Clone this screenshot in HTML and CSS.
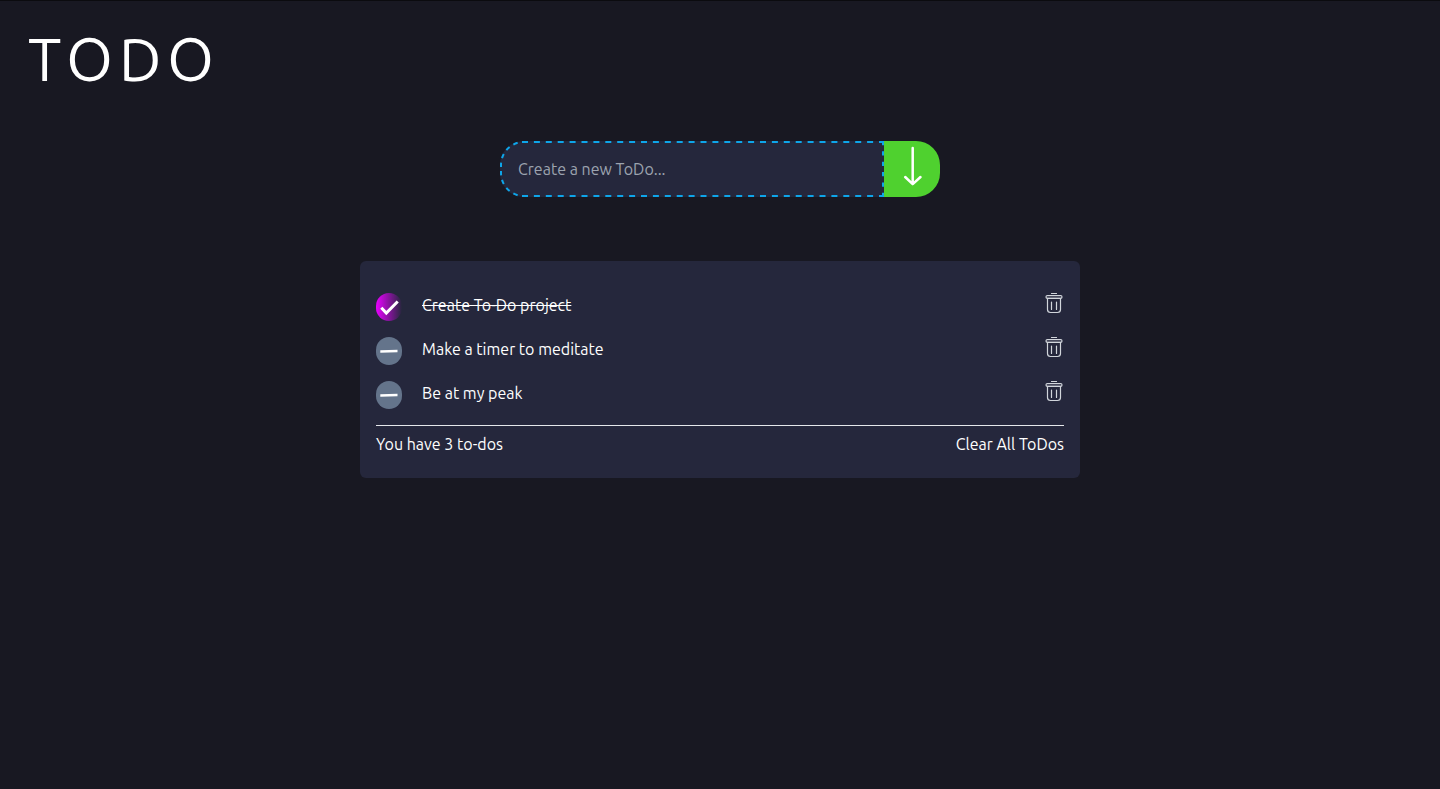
FILE: index.html
```html
<!DOCTYPE html>
<html lang="en">
<head>
<meta charset="utf-8">
<meta name="viewport" content="width=device-width, initial-scale=1">
<title>TODO</title>
<link rel="stylesheet" href="styles.css">
</head>
<body>
<svg class="sprite" aria-hidden="true">
  <symbol id="trash" viewBox="0 0 20 22">
    <g fill="none" stroke="currentColor" stroke-linecap="round" stroke-linejoin="round">
      <path d="M7.5 .5h5" stroke-width="1.1"/>
      <rect x="2" y="2.500" width="16" height="2.800" rx="1.400" stroke-width="1.200"/>
      <path d="M3 4h14" stroke-width="1" opacity=".4"/>
      <path d="M3.500 5.500v11q0 3 3 3h7q3 0 3-3v-11" stroke-width="1.200"/>
      <path d="M7.500 9v7.500M12.500 9v7.500" stroke-width="1.200"/>
    </g>
  </symbol>
</svg>
<header class="header">
  <h1 class="title">TODO</h1>
</header>
<main class="main">
  <form class="create">
    <div class="field">
      <svg class="outline" aria-hidden="true">
        <path d="M1 26V24A23 23 0 0 1 22 1" stroke-dasharray="4.500 4.500"/>
        <path d="M1 30V32A23 23 0 0 0 22 55" stroke-dasharray="4.500 4.500"/>
        <line x1="22" y1="1" x2="100%" y2="1" stroke-dasharray="6 5.900"/>
        <line x1="22" y1="55" x2="100%" y2="55" stroke-dasharray="6 5.900"/>
        <svg x="100%" overflow="visible"><path d="M-1 0V56" stroke-dasharray="4.200 6.160"/></svg>
      </svg>
      <input class="create-input" type="text" placeholder="Create a new ToDo..." aria-label="Create a new ToDo">
    </div>
    <button class="create-button" type="button" aria-label="Add">
      <svg width="20" height="40" viewBox="0 0 20 40" fill="none" stroke="#fff" stroke-width="2.500" stroke-linecap="round" stroke-linejoin="round"><path d="M9.700 2V38M2.200 31L9.700 38.200L17.500 31"/></svg>
    </button>
  </form>
  <section class="card">
    <ul class="list">
      <li class="item">
        <input class="check" type="checkbox" id="todo-1" checked>
        <label class="label" for="todo-1">
          <span class="mark"><svg width="20" height="20" viewBox="0 0 20 20"><path d="M2.300 10.800L7.300 16L18.700 4.500" fill="none" stroke="#fff" stroke-width="3"/></svg></span>
          <span class="text">Create To-Do project</span>
        </label>
        <button class="delete" type="button" aria-label="Delete Create To-Do project"><svg width="20" height="22"><use href="#trash"/></svg></button>
      </li>
      <li class="item">
        <input class="check" type="checkbox" id="todo-2">
        <label class="label" for="todo-2">
          <span class="mark"><svg width="20" height="20" viewBox="0 0 20 20"><path d="M1.300 9.200L18.500 8.700V11.200L1.300 11.800Z" fill="#fff"/></svg></span>
          <span class="text">Make a timer to meditate</span>
        </label>
        <button class="delete" type="button" aria-label="Delete Make a timer to meditate"><svg width="20" height="22"><use href="#trash"/></svg></button>
      </li>
      <li class="item">
        <input class="check" type="checkbox" id="todo-3">
        <label class="label" for="todo-3">
          <span class="mark"><svg width="20" height="20" viewBox="0 0 20 20"><path d="M1.300 9.200L18.500 8.700V11.200L1.300 11.800Z" fill="#fff"/></svg></span>
          <span class="text">Be at my peak</span>
        </label>
        <button class="delete" type="button" aria-label="Delete Be at my peak"><svg width="20" height="22"><use href="#trash"/></svg></button>
      </li>
    </ul>
    <footer class="footer">
      <p class="count">You have 3 to-dos</p>
      <button class="clear" type="button">Clear All ToDos</button>
    </footer>
  </section>
</main>
</body>
</html>
```
FILE: styles.css
```css
* {
  box-sizing: border-box;
  margin: 0;
  padding: 0;
}

body {
  min-height: 100vh;
  border-top: 1px solid #0b0b0f;
  background: #181822;
  color: #fff;
  font: 16px/24px Ubuntu, "Noto Sans", sans-serif;
}

button,
input {
  border: 0;
  background: none;
  color: inherit;
  font: inherit;
}

button,
.label {
  cursor: pointer;
}

svg {
  display: block;
}

.sprite {
  position: absolute;
  width: 0;
  height: 0;
}

.header {
  padding: 28px;
}

.title {
  font-size: 60px;
  font-weight: 400;
  line-height: 60px;
  letter-spacing: 6px;
}

.main {
  display: flex;
  flex-direction: column;
  align-items: center;
  gap: 64px;
  padding: 24px 16px;
}

.create {
  display: flex;
  width: 100%;
  max-width: 440px;
  height: 56px;
}

.field {
  display: flex;
  flex: 1;
  position: relative;
  min-width: 0;
  border-radius: 24px 0 0 24px;
  background: #25273c;
}

.outline {
  position: absolute;
  inset: 0;
  width: 100%;
  height: 100%;
  fill: none;
  stroke: #0ea5e9;
  stroke-width: 2px;
  pointer-events: none;
}

.create-input {
  flex: 1;
  min-width: 0;
  padding: 0 18px;
  border-radius: 24px 0 0 24px;
}

.create-input::placeholder {
  color: #9ca3af;
}

.create-button {
  display: flex;
  justify-content: center;
  width: 56px;
  padding: 5px 0 0 2px;
  border-radius: 0 24px 24px 0;
  background: #4fd12f;
}

.card {
  width: 100%;
  max-width: 720px;
  padding: 24px 16px 16px;
  border-radius: 6px;
  background: #25273c;
}

.list {
  border-bottom: 1px solid #e5e7eb;
  padding-bottom: 8px;
  list-style: none;
}

.item {
  display: flex;
  align-items: flex-start;
  position: relative;
  padding: 8px 0;
}

.check {
  position: absolute;
  width: 26px;
  height: 28px;
  opacity: 0;
}

.label {
  display: flex;
  flex: 1;
  gap: 20px;
}

.mark {
  display: grid;
  place-items: center;
  width: 26px;
  height: 28px;
  border-radius: 13px;
  background: #64748b;
}

.check:checked + .label .mark {
  background: linear-gradient(to right, #e800ff, #25273c);
}

.check:checked + .label .text {
  text-decoration: line-through;
}

.delete {
  color: #d1d5db;
}

.footer {
  display: flex;
  justify-content: space-between;
  padding: 6px 0;
}
```
